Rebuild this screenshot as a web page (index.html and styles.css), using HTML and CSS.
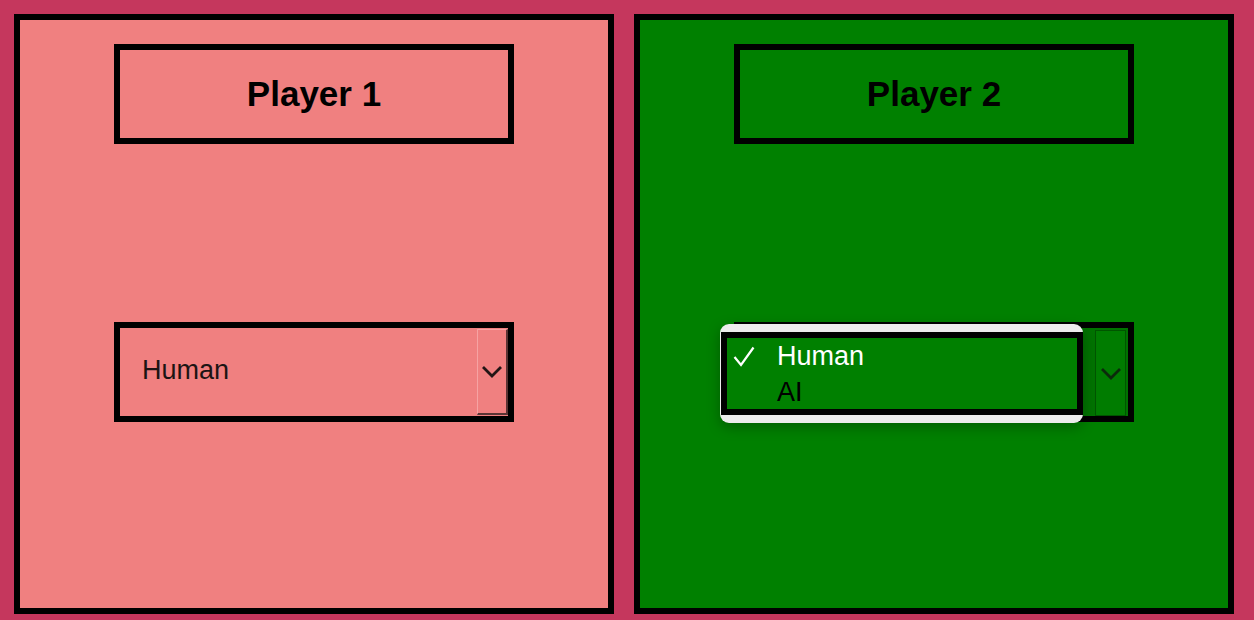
FILE: index.html
```html
<!DOCTYPE html>
<html>
<head>
<meta charset="utf-8">
<link rel="stylesheet" href="styles.css">
</head>
<body>
<div class="wrap">
  <section class="panel panel-red">
    <div class="title">Player 1</div>
    <div class="select">
      <span class="value">Human</span>
      <span class="btn">
        <svg class="chev" width="22" height="13" viewBox="0 0 22 13"><polyline points="2,2 11,11 20,2" fill="none" stroke="#221515" stroke-width="2.8"/></svg>
      </span>
    </div>
  </section>
  <section class="panel panel-green">
    <div class="title">Player 2</div>
    <div class="select select-open">
      <span class="value"></span>
      <span class="btn">
        <svg class="chev" width="22" height="13" viewBox="0 0 22 13"><polyline points="2,2 11,11 20,2" fill="none" stroke="#0b2a0b" stroke-width="2.8"/></svg>
      </span>
      <div class="popup">
        <div class="list">
          <div class="opt opt-sel">
            <svg class="check" width="22" height="21" viewBox="0 0 22 21"><polyline points="1.5,11 8,19 20.5,1.5" fill="none" stroke="#ffffff" stroke-width="2.2"/></svg>
            <span>Human</span>
          </div>
          <div class="opt"><span>AI</span></div>
        </div>
      </div>
    </div>
  </section>
</div>
</body>
</html>
```
FILE: styles.css
```css
html, body {
  margin: 0;
  padding: 0;
  background: #c5375d;
  font-family: "Liberation Sans", Arial, Helvetica, sans-serif;
}
.wrap {
  display: flex;
  gap: 20px;
  padding: 14px 20px 6px 14px;
}
.panel {
  width: 600px;
  height: 600px;
  box-sizing: border-box;
  border: 6px solid #000;
  display: flex;
  flex-direction: column;
  align-items: center;
  padding-top: 24px;
}
.panel-red { background: #f08080; }
.panel-green { background: #008000; }
.title {
  width: 400px;
  height: 100px;
  box-sizing: border-box;
  border: 6px solid #000;
  display: flex;
  align-items: center;
  justify-content: center;
  font-weight: bold;
  font-size: 35px;
  color: #000;
}
.select {
  position: relative;
  margin-top: 178px;
  width: 400px;
  height: 100px;
  box-sizing: border-box;
  border: 6px solid #000;
  display: flex;
  align-items: stretch;
}
.value {
  flex: 1;
  display: flex;
  align-items: center;
  padding-left: 22px;
  padding-bottom: 4px;
  font-size: 27px;
  color: #1c1414;
}
.btn {
  width: 31px;
  margin: 1px 0;
  box-sizing: border-box;
  border-style: solid;
  border-width: 1px 2px 2px 1px;
  border-color: #f6a3a3 #5a3434 #5a3434 #f6a3a3;
  display: flex;
  align-items: center;
  justify-content: center;
}
.chev {
  flex-shrink: 0;
  display: block;
}
.select-open { background: #007300; }
.select-open .btn {
  margin: 2px 2px 0 0;
  height: 86px;
  background: #007c00;
  border-width: 1px;
  border-color: #005500;
}
.popup {
  position: absolute;
  left: -20px;
  top: -4px;
  width: 363px;
  height: 99px;
  box-sizing: border-box;
  background: #ececec;
  border-radius: 9px;
  padding: 8px 0 8px 1px;
  box-shadow: 0 4px 14px rgba(0, 0, 0, 0.28);
}
.list {
  height: 100%;
  box-sizing: border-box;
  border: 6px solid #000;
  background: #008000;
}
.opt {
  position: relative;
  height: 36px;
  line-height: 36px;
  padding-left: 50px;
  font-size: 27px;
  color: #000;
}
.opt-sel { color: #fff; }
.check {
  position: absolute;
  left: 6px;
  top: 8px;
}
```
